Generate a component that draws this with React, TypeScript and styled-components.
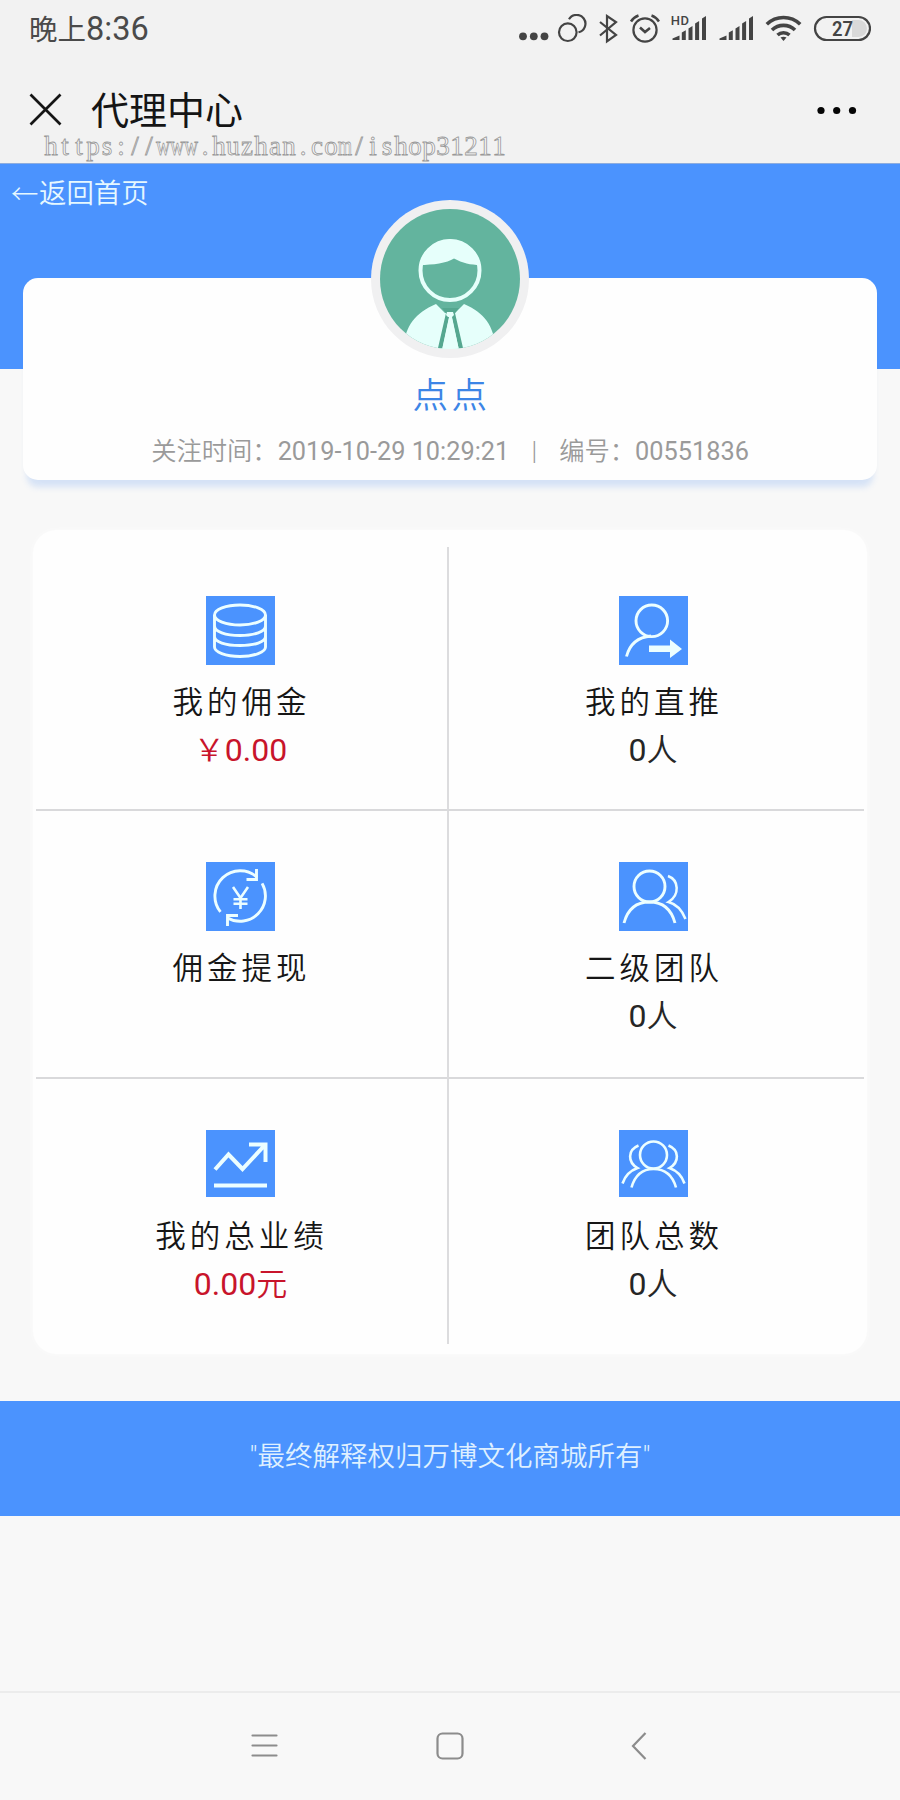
import React from "react";
import styled, { createGlobalStyle } from "styled-components";

const BLUE = "#4b93fe";
const PALE = "#ecfeff";

const GlobalStyle = createGlobalStyle`
  * { box-sizing: border-box; }
  body { margin: 0; background: #f8f8f8; font-family: Roboto, "Noto Sans CJK SC", sans-serif; }
  svg { display: block; flex: none; }
`;

const Screen = styled.div`
  width: 900px;
  height: 1800px;
  display: flex;
  flex-direction: column;
  background: #f8f8f8;
  overflow: hidden;
`;

const Header = styled.header`
  position: relative;
  height: 164px;
  background: #f2f2f2;
  border-bottom: 1px solid #8eadde;
`;

const StatusBar = styled.div`
  height: 58px;
  padding: 0 29px 0 29px;
  display: flex;
  align-items: center;
  justify-content: space-between;
  color: #444;
`;

const Clock = styled.div`
  margin-top: 2px;
  font-size: 28.5px;
  line-height: 58px;
  color: #4a4a4a;
  white-space: nowrap;
`;

const ClockDigits = styled.span`
  font-size: 32.5px;
`;

const StatusIcons = styled.div`
  display: flex;
  align-items: center;
`;

const StatusGlyph = styled.svg<{ $gap?: number }>`
  margin-left: ${(p) => p.$gap ?? 0}px;
`;

const TitleBar = styled.div`
  height: 104px;
  padding: 0 43px 0 29px;
  display: flex;
  align-items: flex-start;
`;

const CloseIcon = styled.svg`
  margin-top: 35px;
`;

const Title = styled.h1`
  margin: 25px auto 0 28px;
  font-size: 38px;
  line-height: 56px;
  font-weight: 400;
  color: #151515;
`;

const MoreIcon = styled.svg`
  margin-top: 48px;
`;

const Watermark = styled.div`
  position: absolute;
  left: 44px;
  top: 130px;
  font-family: "Liberation Serif", serif;
  font-size: 27px;
  line-height: 32px;
  color: #f7f7f7;
  -webkit-text-stroke: 0.8px #999;
  white-space: nowrap;
`;

const WatermarkChar = styled.span<{ $squeeze: number }>`
  display: inline-flex;
  justify-content: center;
  width: 14px;
  transform: scaleX(${(p) => p.$squeeze});
`;

const Hero = styled.section`
  height: 366px;
  padding: 0 23px;
  background: linear-gradient(${BLUE} 0 205px, #f8f8f8 205px);
`;

const BackLink = styled.a`
  height: 114px;
  margin-left: -12px;
  padding-top: 12px;
  display: flex;
  align-items: flex-start;
  font-size: 27.4px;
  line-height: 36px;
  font-weight: 350;
  color: #e6f8ff;
`;

const BackArrow = styled.span`
  width: 28px;
  margin-top: -2px;
  font-family: "Noto Sans CJK SC", sans-serif;
  font-weight: 300;
`;

const ProfileCard = styled.div`
  height: 202px;
  border-radius: 15px;
  background: #fefefe;
  box-shadow: 0 11px 6px -4px rgba(75, 140, 240, 0.2);
  display: flex;
  flex-direction: column;
  align-items: center;
`;

const Avatar = styled.svg`
  margin-top: -78px;
`;

const Name = styled.div`
  margin-top: 11px;
  padding-left: 3px;
  font-size: 35.5px;
  line-height: 54px;
  letter-spacing: 3.5px;
  font-weight: 350;
  color: #3c85e6;
`;

const Info = styled.div`
  margin-top: 11px;
  display: flex;
  font-size: 25.3px;
  line-height: 36px;
  color: #9a9a9a;
  font-weight: 350;
  white-space: pre;
`;

const Digits = styled.span`
  font-weight: 400;
`;

const Divider = styled.span`
  width: 50px;
  text-align: center;
`;

const Panel = styled.section`
  height: 824px;
  margin: 0 33px;
  padding: 17px 3px 10px;
  border-radius: 24px;
  background: #fefefe;
  box-shadow: 0 0 4px #fcfcfc;
  display: grid;
  grid-template-columns: 411px 417px;
  grid-template-rows: 264px 268px 265px;
`;

const Cell = styled.div<{ $right?: boolean; $last?: boolean; $top: number }>`
  display: flex;
  flex-direction: column;
  align-items: center;
  padding-top: ${(p) => p.$top}px;
  padding-right: ${(p) => (p.$right ? 7 : 2)}px;
  border-left: ${(p) => (p.$right ? "2px solid #dcdcde" : "0")};
  border-bottom: ${(p) => (p.$last ? "0" : "2px solid #d9d9db")};
`;

const CellIcon = styled.svg`
  background: ${BLUE};
`;

const Label = styled.div<{ $low?: boolean }>`
  margin-top: ${(p) => (p.$low ? 14 : 12)}px;
  padding-left: 2px;
  font-family: "Noto Sans CJK SC", sans-serif;
  font-size: 30.5px;
  line-height: 46px;
  letter-spacing: 4px;
  font-weight: 350;
  color: #161616;
`;

const Value = styled.div<{ $red?: boolean }>`
  margin-top: 4px;
  font-size: 32px;
  line-height: 46px;
  font-weight: 400;
  color: ${(p) => (p.$red ? "#c8142b" : "#262626")};
  white-space: nowrap;
`;

const Unit = styled.span`
  font-size: 31px;
  font-weight: 350;
`;

const Notice = styled.footer`
  height: 115px;
  margin-top: 47px;
  display: flex;
  align-items: center;
  justify-content: center;
  padding-bottom: 9px;
  background: ${BLUE};
  color: #dff0ff;
  font-size: 27.5px;
  font-weight: 350;
`;

const NavBar = styled.nav`
  height: 109px;
  margin-top: auto;
  padding: 0 0 2px 251px;
  border-top: 2px solid #ececec;
  display: flex;
  align-items: center;
`;

const HomeIcon = styled.svg`
  margin: 0 167px 0 158px;
`;

const Bars = ({ x }: { x: number }) => (
  <g fill="#444">
    <path d={`M${x} 39v-1.600l7-3V39z`} />
    <path d={`M${x + 9.3} 39v-7.600l4-2.200V39z`} />
    <path d={`M${x + 16} 39V27.600l4-2.600V39z`} />
    <path d={`M${x + 22.6} 39V22.500l4-2.500V39z`} />
    <path d={`M${x + 29.5} 39V17.500l4-2.500V39z`} />
  </g>
);

const line = { fill: "none", stroke: "#444", strokeWidth: 2.2 };
const white = { fill: "none", stroke: PALE, strokeWidth: 2.9 };

const StatusRow = () => (
  <StatusIcons>
    <StatusGlyph width="30" height="30" viewBox="519 13 30 30" fill="#444">
      <circle cx="523" cy="35.300" r="3.900" />
      <circle cx="533.800" cy="35.300" r="3.900" />
      <circle cx="544.500" cy="35.300" r="3.900" />
    </StatusGlyph>
    <StatusGlyph $gap={8} width="30" height="30" viewBox="557 13 30 30" {...line}>
      <circle cx="567.800" cy="31.200" r="8.800" />
      <path d="M569 18.300A8.800 8.800 0 1 1 578.500 31.300" />
    </StatusGlyph>
    <StatusGlyph $gap={12} width="20" height="30" viewBox="599 13 20 30" {...line}>
      <path d="M600 21l16 13-9 6.300V15l9 6-16 13.500" />
    </StatusGlyph>
    <StatusGlyph $gap={10} width="31" height="30" viewBox="629 13 31 30" {...line}>
      <circle cx="645" cy="29" r="11.600" />
      <path d="M631 20.500Q634 16 638.500 14.500M651.500 14.500Q656 16 659 20.500M640 26.500l5 4.500 5-4" strokeWidth="2.600" />
    </StatusGlyph>
    <StatusGlyph $gap={11} width="36" height="30" viewBox="671 13 36 30">
      <text x="670.800" y="23.500" fontSize="13" fontWeight="500" letterSpacing="0.500" fill="#444">HD</text>
      <Bars x={672.5} />
    </StatusGlyph>
    <StatusGlyph $gap={12} width="36" height="30" viewBox="719 13 36 30">
      <Bars x={719.5} />
    </StatusGlyph>
    <StatusGlyph $gap={10} width="37" height="30" viewBox="765 13 37 30" fill="none" stroke="#444" strokeWidth="3.600">
      <path d="M766.800 23.300a24 24 0 0 1 33.400 0M772 29a16.500 16.500 0 0 1 23 0M777.500 34a9 9 0 0 1 12 0" />
      <path d="M780.500 36.500q3-1.600 6 0l-3 3.500z" fill="#444" stroke="none" />
    </StatusGlyph>
    <StatusGlyph $gap={11} width="58" height="30" viewBox="813 13 58 30">
      <path d="M852 19h6.500a8.500 8.500 0 0 1 0 17H852z" fill="#d9d9d9" />
      <rect x="815" y="16" width="55" height="23" rx="11.500" {...line} />
      <text x="832" y="34.500" fontSize="19.500" fontWeight="600" textLength="21" lengthAdjust="spacingAndGlyphs" fill="#444">27</text>
    </StatusGlyph>
  </StatusIcons>
);

const watermark = "https://www.huzhan.com/ishop31211";
const squeeze: Record<string, number> = { w: 0.72, m: 0.68 };

const CoinsIcon = () => (
  <g {...white}>
    <ellipse cx="34" cy="19" rx="25.500" ry="10" />
    <path d="M8.500 19v32c0 5 11 9.500 25.500 9.500S59.500 56 59.500 51V19M8.500 30c0 5.500 11 9.500 25.500 9.500S59.500 35.500 59.500 30M8.500 40.500C8.500 46 19.500 49.500 34 49.500s25.500-3.500 25.500-9" />
  </g>
);

const ReferralIcon = () => (
  <g {...white}>
    <circle cx="32.800" cy="24.800" r="15.800" />
    <path d="M7.500 60.500C11 47 20 41 32 40" />
    <path d="M30 49.500h21v-6L63 53 51 62v-6H30z" fill={PALE} stroke="none" />
  </g>
);

const WithdrawIcon = () => (
  <g {...white}>
    <path d="M14.500 49.900A25.300 25.300 0 0 1 51.100 15.200M56.100 21.400A25.300 25.300 0 0 1 21.600 55.900" />
    <path d="M50.500 7v10.500H40.500M21.500 64V53.500h10.500" />
    <path d="M27 25l7.500 11L42 25M34.500 36v11M27.500 37.300h14M27.500 41.800h14" strokeWidth="2.600" />
  </g>
);

const TeamIcon = () => (
  <g {...white}>
    <circle cx="30.500" cy="24.500" r="15.500" />
    <path d="M5 61C9 46 18 40 30.500 40S52 46 56 61" />
    <path d="M49 14c11 4 12 19 .5 26C57 42 63 48 66.500 57" strokeWidth="2.500" />
  </g>
);

const GrowthIcon = () => (
  <g {...white} strokeWidth="4">
    <path d="M9 39.500l13.500-15L36.500 39 58 16M43 14.500h16.500V32M8 55.500h53" />
  </g>
);

const GroupIcon = () => (
  <g {...white} strokeWidth="2.600">
    <circle cx="34.500" cy="25" r="13.500" />
    <path d="M12.500 57.500C16 45 23 39 34.500 39s19 6 22.500 18.500" />
    <path d="M19.500 15.500C8.500 20 8.500 32 18.500 38 10 41 6 46 3.500 53.500M49.500 15.500c11 4.500 11 16.500 1 22.500C59 41 63 46 65.500 53.500" />
  </g>
);

type Item = {
  label: string;
  value?: React.ReactNode;
  red?: boolean;
  icon: React.ReactNode;
  h?: number;
  top: number;
};

const people = <>0<Unit>人</Unit></>;

const items: Item[] = [
  { label: "我的佣金", value: <><Unit>￥</Unit>0.00</>, red: true, icon: <CoinsIcon />, top: 49 },
  { label: "我的直推", value: people, icon: <ReferralIcon />, top: 49 },
  { label: "佣金提现", icon: <WithdrawIcon />, top: 51 },
  { label: "二级团队", value: people, icon: <TeamIcon />, top: 51 },
  { label: "我的总业绩", value: <>0.00<Unit>元</Unit></>, red: true, icon: <GrowthIcon />, h: 67, top: 51 },
  { label: "团队总数", value: people, icon: <GroupIcon />, h: 67, top: 51 },
];

export default function App() {
  return (
    <Screen>
      <GlobalStyle />
      <Header>
        <StatusBar>
          <Clock>晚上<ClockDigits>8:36</ClockDigits></Clock>
          <StatusRow />
        </StatusBar>
        <TitleBar>
          <CloseIcon width="34" height="34" viewBox="0 0 34 34" fill="none" stroke="#151515" strokeWidth="2.700">
            <path d="M1.500 1.500l30 30M31.500 1.500l-30 30" />
          </CloseIcon>
          <Title>代理中心</Title>
          <MoreIcon width="40" height="10" viewBox="0 0 40 10" fill="#050505">
            <circle cx="4" cy="4.500" r="3.600" />
            <circle cx="19.700" cy="4.500" r="3.600" />
            <circle cx="35.500" cy="4.500" r="3.600" />
          </MoreIcon>
        </TitleBar>
        <Watermark>
          {[...watermark].map((ch, i) => (
            <WatermarkChar key={i} $squeeze={squeeze[ch] ?? 1}>{ch}</WatermarkChar>
          ))}
        </Watermark>
      </Header>

      <Hero>
        <BackLink><BackArrow>←</BackArrow>返回首页</BackLink>
        <ProfileCard>
          <Avatar width="158" height="158" viewBox="0 0 158 158">
            <defs>
              <clipPath id="face"><circle cx="79" cy="79" r="70" /></clipPath>
            </defs>
            <circle cx="79" cy="79" r="79" fill="#f0f0f1" />
            <circle cx="79" cy="79" r="70" fill="#63b49e" />
            <circle cx="79" cy="70.500" r="29.500" fill="none" stroke="#e6fffb" strokeWidth="4" />
            <path d="M48.500 65A31 31 0 0 1 109.500 65c-10 0-18-2-26.500-6.500C76 63 62 65 48.500 65z" fill="#e6fffb" />
            <g clipPath="url(#face)">
              <path d="M32 150c2-24 12-37 33-46l9 9h10l9-9c21 9 30 22 32 46z" fill="#e6fffb" />
              <path d="M71 108l4 5-8 35h4.500l7-32h2l7 32H92l-8-35 4-5z" fill="#55a790" />
              <path d="M76 112h6l1 3-2 2h-4l-2-2z" fill="#e6fffb" />
              <path d="M78 117h3l7 33H71z" fill="#e6fffb" />
            </g>
          </Avatar>
          <Name>点点</Name>
          <Info>
            <span>关注时间：</span>
            <Digits>2019-10-29 10:29:21</Digits>
            <Divider>|</Divider>
            <span>编号：</span>
            <Digits>00551836</Digits>
          </Info>
        </ProfileCard>
      </Hero>

      <Panel>
        {items.map((it, i) => (
          <Cell key={it.label} $right={i % 2 === 1} $last={i > 3} $top={it.top}>
            <CellIcon width="69" height={it.h ?? 69} viewBox={`0 0 69 ${it.h ?? 69}`}>{it.icon}</CellIcon>
            <Label $low={i > 3}>{it.label}</Label>
            {it.value && <Value $red={it.red}>{it.value}</Value>}
          </Cell>
        ))}
      </Panel>

      <Notice>"最终解释权归万博文化商城所有"</Notice>

      <NavBar>
        <svg width="27" height="28" viewBox="0 0 27 28" stroke="#8c8c8c" strokeWidth="2.200" strokeLinecap="round">
          <path d="M1.500 3.500h24M1.500 13.500h24M1.500 23.500h24" />
        </svg>
        <HomeIcon width="28" height="28" viewBox="0 0 28 28" fill="none" stroke="#8c8c8c" strokeWidth="2.200">
          <rect x="1.500" y="1.500" width="25" height="25" rx="5" />
        </HomeIcon>
        <svg width="16" height="28" viewBox="0 0 16 28" fill="none" stroke="#8c8c8c" strokeWidth="2.200">
          <path d="M14.500 1L2 14l12.500 13" />
        </svg>
      </NavBar>
    </Screen>
  );
}
